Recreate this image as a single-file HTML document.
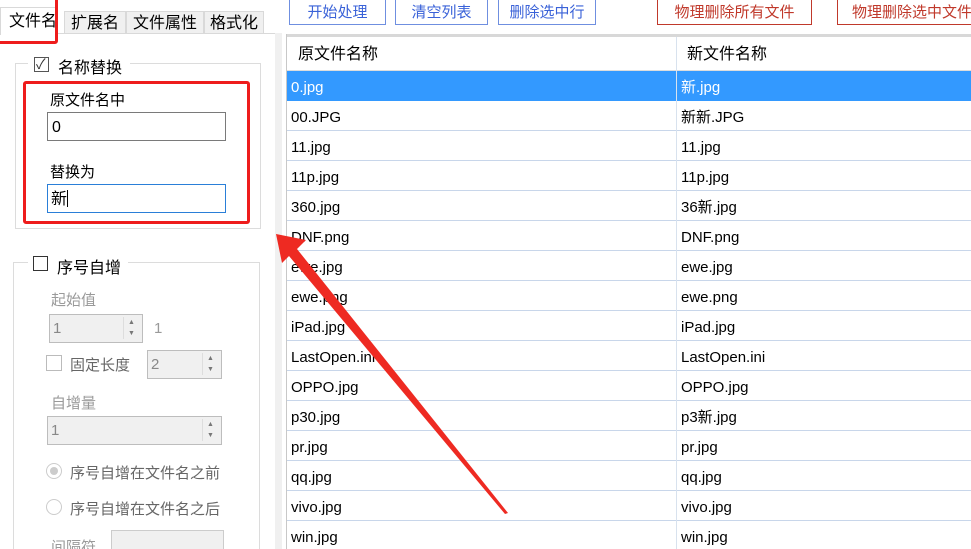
<!DOCTYPE html>
<html><head><meta charset="utf-8"><style>
*{box-sizing:border-box;margin:0;padding:0}
html,body{width:971px;height:549px;overflow:hidden}
body{background:#fff;position:relative;font-family:"Liberation Sans","Noto Sans CJK SC",sans-serif;font-size:15px;color:#000}
.a{position:absolute}
.tab{position:absolute;top:11px;height:23px;border:1px solid #d9d9d9;border-bottom:none;background:#f0f0f0;font-size:16px;text-align:center;line-height:24px}
.btn{position:absolute;top:-3px;height:28px;border:1px solid #6f8fe0;background:#fff;color:#3a62d8;font-size:15px;text-align:center;line-height:29px}
.rb{border-color:#c0392b;color:#c0392b}
.row{position:absolute;left:287px;width:684px;height:30px;border-bottom:1px solid #c8d6ea;font-size:15px;line-height:34px}
.row span{position:absolute;top:0}
.c1{left:4px}.c2{left:394px}
.gray{color:#9a9a9a}
.spin{position:absolute;border:1px solid #bdbdbd;background:#f0f0f0;color:#888;font-size:15px;padding-left:3px;line-height:27px}
.spin i{position:absolute;right:3px;top:2px;width:16px;height:22px;border-left:1px solid #ddd;font-style:normal;font-size:7px;line-height:11px;text-align:center;color:#777}
.cb{position:absolute;width:15px;height:15px;border:1px solid #333;background:#fff}
</style></head><body>
<div class="tab" style="left:64px;width:62px">扩展名</div>
<div class="tab" style="left:126px;width:78px">文件属性</div>
<div class="tab" style="left:204px;width:60px">格式化</div>
<div class="a" style="left:0;top:33px;width:276px;height:520px;border:1px solid #d9d9d9;border-left:none;background:#fff"></div>
<div class="a" style="left:0;top:7px;width:58px;height:28px;background:#fff;border:1px solid #d9d9d9;border-bottom:none;font-size:16px;line-height:28px;padding-left:8px">文件名</div>
<div class="a" style="left:-5px;top:-5px;width:63px;height:49px;border:3px solid #ee1c1c;border-radius:3px"></div>
<div class="a" style="left:275px;top:33px;width:7px;height:520px;background:#f0f0f0"></div>
<div class="a" style="left:15px;top:63px;width:246px;height:166px;border:1px solid #dcdcdc"></div>
<div class="a" style="left:28px;top:53px;width:102px;height:22px;background:#fff"></div>
<div class="cb" style="left:34px;top:57px;border-color:#555"><span style="position:absolute;left:1px;top:-4px;font-size:14px;color:#333">✓</span></div>
<div class="a" style="left:58px;top:54px;font-size:16px">名称替换</div>
<div class="a" style="left:50px;top:89px;font-size:15px">原文件名中</div>
<div class="a" style="left:47px;top:112px;width:179px;height:29px;border:1px solid #7a7a7a;padding-left:4px;line-height:29px;font-size:16px">0</div>
<div class="a" style="left:50px;top:161px;font-size:15px">替换为</div>
<div class="a" style="left:47px;top:184px;width:179px;height:29px;border:1px solid #2a7fd8;padding-left:3px;line-height:29px;font-size:16px">新<span style="display:inline-block;width:1px;height:17px;background:#000;vertical-align:-3px"></span></div>
<div class="a" style="left:23px;top:81px;width:227px;height:143px;border:3px solid #ee1c1c;border-radius:3px"></div>
<div class="a" style="left:13px;top:262px;width:247px;height:300px;border:1px solid #dcdcdc"></div>
<div class="a" style="left:28px;top:252px;width:100px;height:22px;background:#fff"></div>
<div class="cb" style="left:33px;top:256px"></div>
<div class="a" style="left:57px;top:254px;font-size:16px">序号自增</div>
<div class="a gray" style="left:51px;top:289px">起始值</div>
<div class="spin" style="left:49px;top:314px;width:94px;height:29px">1<i>▲<br>▼</i></div>
<div class="a gray" style="left:154px;top:320px">1</div>
<div class="a" style="left:46px;top:355px;width:16px;height:16px;border:1px solid #bbb"></div>
<div class="a" style="left:70px;top:354px;color:#666">固定长度</div>
<div class="spin" style="left:147px;top:350px;width:75px;height:29px">2<i>▲<br>▼</i></div>
<div class="a gray" style="left:51px;top:392px">自增量</div>
<div class="spin" style="left:47px;top:416px;width:175px;height:29px">1<i>▲<br>▼</i></div>
<div class="a" style="left:46px;top:463px;width:16px;height:16px;border:1px solid #ccc;border-radius:50%"><div style="margin:3px;width:8px;height:8px;border-radius:50%;background:#ccc"></div></div>
<div class="a" style="left:70px;top:462px;color:#666">序号自增在文件名之前</div>
<div class="a" style="left:46px;top:499px;width:16px;height:16px;border:1px solid #ccc;border-radius:50%"></div>
<div class="a" style="left:70px;top:498px;color:#666">序号自增在文件名之后</div>
<div class="a gray" style="left:51px;top:536px">间隔符</div>
<div class="a" style="left:111px;top:530px;width:113px;height:30px;border:1px solid #ccc;background:#f0f0f0"></div>
<div class="btn" style="left:289px;width:97px">开始处理</div>
<div class="btn" style="left:395px;width:93px">清空列表</div>
<div class="btn" style="left:498px;width:98px">删除选中行</div>
<div class="btn rb" style="left:657px;width:155px">物理删除所有文件</div>
<div class="btn rb" style="left:837px;width:150px;text-align:left;padding-left:14px;white-space:nowrap;overflow:hidden">物理删除选中文件</div>
<div class="a" style="left:286px;top:34px;width:685px;height:3px;background:#d8d8d8"></div>
<div class="a" style="left:286px;top:34px;width:1px;height:520px;background:#c8c8c8"></div>
<div class="row" style="top:37px;height:34px;line-height:36px;font-size:16px;border-bottom:1px solid #ddd"><span style="left:11px">原文件名称</span><span style="left:400px">新文件名称</span></div>
<div class="row" style="top:71px;background:#3399ff;color:#fff;border-bottom-color:#3399ff"><span class="c1">0.jpg</span><span class="c2">新.jpg</span></div>
<div class="row" style="top:101px"><span class="c1">00.JPG</span><span class="c2">新新.JPG</span></div>
<div class="row" style="top:131px"><span class="c1">11.jpg</span><span class="c2">11.jpg</span></div>
<div class="row" style="top:161px"><span class="c1">11p.jpg</span><span class="c2">11p.jpg</span></div>
<div class="row" style="top:191px"><span class="c1">360.jpg</span><span class="c2">36新.jpg</span></div>
<div class="row" style="top:221px"><span class="c1">DNF.png</span><span class="c2">DNF.png</span></div>
<div class="row" style="top:251px"><span class="c1">ewe.jpg</span><span class="c2">ewe.jpg</span></div>
<div class="row" style="top:281px"><span class="c1">ewe.png</span><span class="c2">ewe.png</span></div>
<div class="row" style="top:311px"><span class="c1">iPad.jpg</span><span class="c2">iPad.jpg</span></div>
<div class="row" style="top:341px"><span class="c1">LastOpen.ini</span><span class="c2">LastOpen.ini</span></div>
<div class="row" style="top:371px"><span class="c1">OPPO.jpg</span><span class="c2">OPPO.jpg</span></div>
<div class="row" style="top:401px"><span class="c1">p30.jpg</span><span class="c2">p3新.jpg</span></div>
<div class="row" style="top:431px"><span class="c1">pr.jpg</span><span class="c2">pr.jpg</span></div>
<div class="row" style="top:461px"><span class="c1">qq.jpg</span><span class="c2">qq.jpg</span></div>
<div class="row" style="top:491px"><span class="c1">vivo.jpg</span><span class="c2">vivo.jpg</span></div>
<div class="row" style="top:521px"><span class="c1">win.jpg</span><span class="c2">win.jpg</span></div>
<div class="a" style="left:676px;top:37px;width:1px;height:520px;background:#d8e2ee"></div>
<svg class="a" style="left:0;top:0" width="971" height="549"><polygon points="276,234 306,240 297,249 508,513 505,514 289,256 282,263" fill="#ee2a22"/></svg>
</body></html>
